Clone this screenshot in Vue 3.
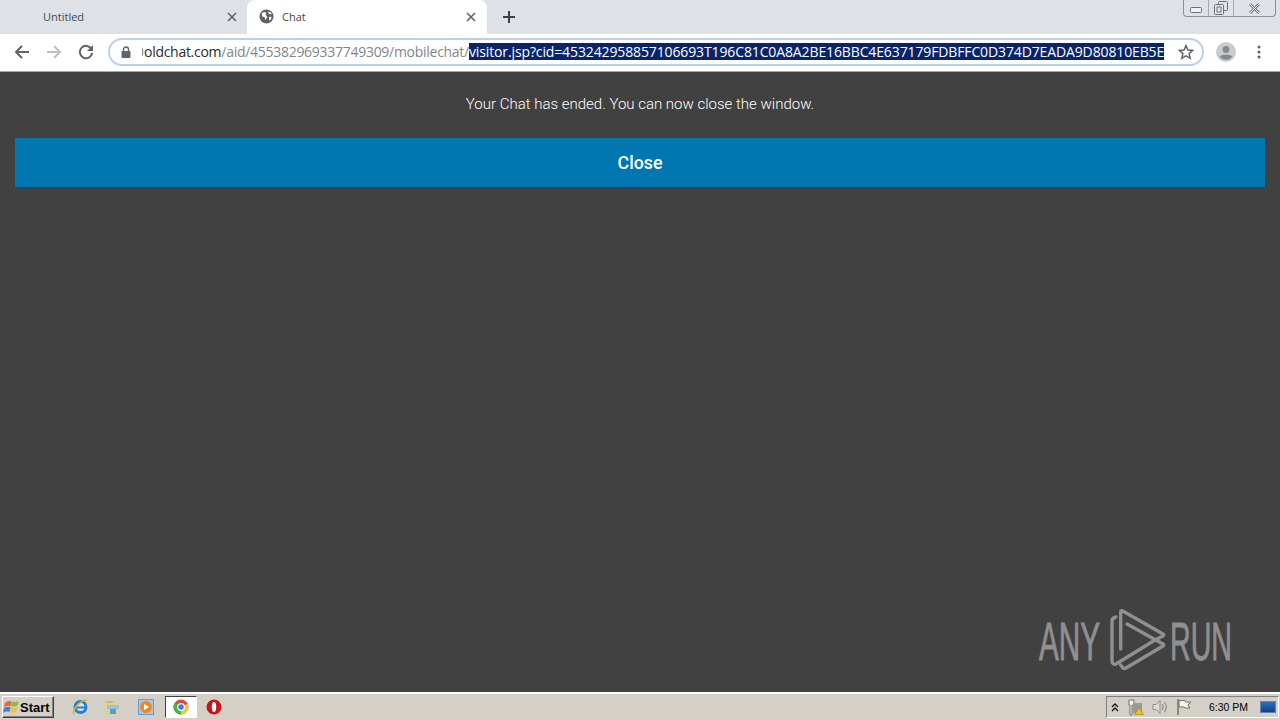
<script setup>
const lead = 'oldchat.com'
const path = '/aid/455382969337749309/mobilechat/'
const sel = 'visitor.jsp?cid=453242958857106693T196C81C0A8A2BE16BBC4E637179FDBFFC0D374D7EADA9D80810EB5E'
</script>

<template>
  <div class="screen">
    <header class="tabstrip">
      <div class="tab">
        <span class="tab-title first">Untitled</span>
        <svg class="x" width="10" height="10" viewBox="0 0 10 10"><path d="M1 1l8 8M9 1l-8 8" stroke="#5f6368" stroke-width="1.6"/></svg>
      </div>
      <div class="tab active">
        <svg class="globe" width="15" height="15" viewBox="0 0 16 16">
          <circle cx="8" cy="8" r="7.5" fill="#5f6368"/>
          <path d="M3 4.2l3.2-.9 1.6 1.2-.9 1.6 1.800 1.500-.6 2.200-1.200 1.800-1-2.700L3.200 7.600zM9.600 2.600l2.600.9 1.600 2-2.400.2-1.200-1.400zM10.600 8.600l2.800-.4-.6 2.600-1.800 1.600z" fill="#fff"/>
        </svg>
        <span class="tab-title">Chat</span>
        <svg class="x" width="10" height="10" viewBox="0 0 10 10"><path d="M1 1l8 8M9 1l-8 8" stroke="#5f6368" stroke-width="1.6"/></svg>
      </div>
      <svg class="plus" width="12" height="12" viewBox="0 0 12 12"><path d="M6 0v12M0 6h12" stroke="#3c4043" stroke-width="2"/></svg>
      <div class="winbtns">
        <span class="wb min"><svg width="12" height="6" viewBox="0 0 12 6"><rect x="0.5" y="0.5" width="11" height="5" rx="1" fill="#eef0f4" stroke="#6b7078"/></svg></span>
        <span class="wb max"><svg width="14" height="14" viewBox="0 0 14 14"><rect x="4.5" y="0.5" width="9" height="9" rx="1" fill="none" stroke="#6b7078"/><rect x="0.5" y="3.500" width="9" height="10" rx="1" fill="#e4e7ee" stroke="#6b7078"/><rect x="3" y="6" width="4" height="5" fill="none" stroke="#6b7078"/></svg></span>
        <span class="wb cls"><svg width="13" height="11" viewBox="0 0 13 11"><path d="M2 1l9 9M11 1l-9 9" stroke="#7a7f87" stroke-width="2.6"/><path d="M2 1l9 9M11 1l-9 9" stroke="#eef0f4" stroke-width="1"/></svg></span>
      </div>
    </header>

    <nav class="toolbar">
      <svg class="nav" width="16" height="16" viewBox="0 0 16 16"><path d="M15 8H2M8 2L2 8l6 6" fill="none" stroke="#5f6368" stroke-width="2"/></svg>
      <svg class="nav" width="16" height="16" viewBox="0 0 16 16"><path d="M1 8h13M8 2l6 6-6 6" fill="none" stroke="#bcc0c5" stroke-width="2"/></svg>
      <svg class="nav" width="16" height="16" viewBox="0 0 16 16"><path d="M13.6 5.200A6.200 6.200 0 1 0 14.200 9" fill="none" stroke="#5f6368" stroke-width="2"/><path d="M15 1v6H9z" fill="#5f6368"/></svg>
      <div class="omnibox">
        <svg class="lock" width="10" height="12" viewBox="0 0 10 12"><path d="M2.500 5V3.500a2.500 2.500 0 0 1 5 0V5" fill="none" stroke="#5f6368" stroke-width="1.400"/><rect x="0.5" y="5" width="9" height="7" rx="1" fill="#5f6368"/></svg>
        <svg class="sliver" width="2" height="8" viewBox="0 0 2 8"><path d="M0 0q2 4 0 8" fill="none" stroke="#777" stroke-width="1"/></svg>
        <div class="url"><span class="lead">{{ lead }}</span><span class="path">{{ path }}</span><span class="sel">{{ sel }}</span></div>
        <svg class="star" width="16" height="16" viewBox="0 0 16 16"><path d="M8 1.600l1.900 4.400 4.800.4-3.600 3.200 1.100 4.700L8 11.800l-4.200 2.500 1.100-4.700L1.300 6.400 6.100 6z" fill="none" stroke="#5f6368" stroke-width="1.500"/></svg>
      </div>
      <svg class="avatar" width="20" height="20" viewBox="0 0 20 20"><circle cx="10" cy="10" r="10" fill="#c9cbce"/><circle cx="10" cy="7.500" r="3.400" fill="#85888c"/><path d="M3.600 14.600c1.600-2.600 11.200-2.600 12.800 0a8 8 0 0 1-12.800 0z" fill="#85888c"/></svg>
      <svg class="dots" width="4" height="14" viewBox="0 0 4 14"><circle cx="2" cy="2" r="1.500" fill="#5f6368"/><circle cx="2" cy="7" r="1.500" fill="#5f6368"/><circle cx="2" cy="12" r="1.500" fill="#5f6368"/></svg>
    </nav>

    <main class="page">
      <p class="msg">Your Chat has ended. You can now close the window.</p>
      <button class="close">Close</button>
      <div class="mark">
        <span class="any">ANY</span>
        <svg width="66" height="70" viewBox="0 0 66 70">
          <g fill="none" stroke="#909090" stroke-width="3.400" stroke-linejoin="round" stroke-linecap="round">
            <path d="M15.700 43V6q0-2 2-1L58 28q1.500 1 0 2L50 34"/>
            <path d="M22 18L58 38q1.500 1 0 2L21 62q-2 1-3 0l-2.300-3"/>
            <path d="M11 11Q7 12 7 15V55q0 4 4 3L50 34"/>
          </g>
        </svg>
        <span class="run">RUN</span>
      </div>
    </main>

    <footer class="taskbar">
      <button class="start">
        <svg width="17" height="18" viewBox="0 0 18 18">
          <path d="M2 5q3-3 7-2l-1 5Q5 7 1 9z" fill="#e8672c"/><path d="M9.500 3q3 1.500 7-.5l-1 5q-4 2-7 .5z" fill="#8fbf3a"/><path d="M1 10q3-2 7-1l-1 5q-4-1-7 1z" fill="#3d82d6"/><path d="M8.500 9.500q3 1.500 6.500-.5l-1 5q-3 2-6.500.5z" fill="#edc53a"/>
        </svg>
        <span>Start</span>
      </button>
      <div class="quick">
        <svg width="18" height="18" viewBox="0 0 18 18"><circle cx="9.500" cy="9" r="5.500" fill="#cfe6f7" stroke="#2a7fd0" stroke-width="3"/><path d="M5 9.500h9" stroke="#2a7fd0" stroke-width="2"/><path d="M3 16C0 12 11 1 16 2" fill="none" stroke="#e0b030" stroke-width="1.500"/></svg>
        <svg width="18" height="18" viewBox="0 0 18 18"><path d="M2 5h14v11H2z" fill="#e7d08a"/><path d="M2 3h7l1 2H2z" fill="#d4b860"/><path d="M3 7h12v4H3z" fill="#8fc6e8"/><path d="M6 11h6v5H6z" fill="#5b9cc9"/></svg>
        <svg width="18" height="18" viewBox="0 0 18 18"><rect x="1.500" y="1.500" width="15" height="15" fill="#a8c6e4" stroke="#6e9cc8"/><circle cx="9" cy="9" r="6" fill="#ee8a1c"/><path d="M7 6l5 3-5 3z" fill="#fff"/></svg>
        <span class="chrome-task"><svg width="16" height="16" viewBox="0 0 16 16"><circle cx="8" cy="8" r="7.500" fill="#dd4b3e"/><path d="M8 8l6.800-3.200A7.500 7.500 0 0 1 8 15.500z" fill="#f6c63c"/><path d="M8 8L8 15.500A7.500 7.500 0 0 1 1.500 11.800 7.500 7.500 0 0 1 2 3.500z" fill="#4caf50"/><circle cx="8" cy="8" r="3.400" fill="#3f7fe0" stroke="#fff" stroke-width="1.200"/></svg></span>
        <svg width="16" height="16" viewBox="0 0 16 16"><circle cx="8" cy="8" r="7.500" fill="#c4161c"/><ellipse cx="8" cy="8" rx="2.200" ry="5" fill="#fff"/></svg>
      </div>
      <div class="tray">
        <svg width="8" height="9" viewBox="0 0 8 9"><path d="M1 4l3-3 3 3M1 8l3-3 3 3" fill="none" stroke="#111" stroke-width="1.300"/></svg>
        <svg class="net" width="16" height="17" viewBox="0 0 16 17"><path d="M1 1h5v5H4v10H2V6H1z" fill="#f4f2ec" stroke="#555" stroke-width=".8"/><rect x="5" y="4" width="9" height="10" fill="#9a9a98"/><path d="M11 8l4.500 7.500h-9z" fill="#f0c020" stroke="#8a6a00" stroke-width=".5"/></svg>
        <svg width="16" height="16" viewBox="0 0 16 16"><path d="M1 5.500h3l4-4v13l-4-4H1z" fill="#dcdcd6" stroke="#8e8e8a"/><path d="M10 5c1.500 2 1.500 4 0 6M12.500 3c2.200 3 2.200 7 0 10" fill="none" stroke="#8e8e8a" stroke-width="1.200"/></svg>
        <svg width="16" height="16" viewBox="0 0 16 16"><path d="M2 0v16" stroke="#6e6e6a" stroke-width="1.400"/><path d="M3 1.500h6l1 1.500h5l-3 3 2 3H9L8 8H3z" fill="#f4f2ec" stroke="#6e6e6a"/></svg>
        <span class="time">6:30 PM</span>
        <span class="desk"></span>
      </div>
    </footer>
  </div>
</template>

<style>
html, body { margin: 0; overflow: hidden; }
</style>

<style scoped>
.screen { width: 1280px; height: 720px; display: flex; flex-direction: column; overflow: hidden; }
svg { display: block; flex: none; }

.tabstrip { height: 34px; background: #dee1e6; display: flex; align-items: stretch; flex: none; }
.tab { width: 240px; display: flex; align-items: center; padding: 0 3px 1px 0; box-sizing: border-box; font: 11px "Open Sans", sans-serif; color: #45484c; }
.tab.active { background: #fff; border-radius: 8px 8px 0 0; margin-left: 7px; padding: 0 11px 1px 12px; }
.tab-title { flex: 1; }
.tab-title.first { padding-left: 43px; }
.globe { margin-right: 8px; }
.x { margin-left: 8px; }
.plus { align-self: center; margin-left: 16px; }
.winbtns { margin-left: auto; margin-right: 4px; height: 16px; display: flex; border: 1px solid #8b8f96; border-top: none; border-radius: 0 0 4px 4px; }
.wb { display: flex; align-items: center; justify-content: center; }
.wb + .wb { border-left: 1px solid #a6aab0; }
.min { width: 24px; padding-top: 4px; box-sizing: border-box; }
.max { width: 24px; }
.cls { width: 41px; }

.toolbar { height: 36px; padding-bottom: 1px; background: #fff; display: flex; align-items: center; flex: none; border-bottom: 1px solid #a8a8a8; }
.nav { margin-left: 16px; }
.nav:first-child { margin-left: 14px; }
.omnibox { margin-left: 14px; width: 1096px; height: 28px; box-sizing: border-box; border: 2px solid #bcd0ec; border-radius: 14px; display: flex; align-items: center; padding: 0 8px 0 11px; }
.lock { margin-right: 11px; }
.url { flex: none; white-space: nowrap; font: 14px "Open Sans", sans-serif; line-height: 17px; display: flex; margin-bottom: 1px; letter-spacing: -0.28px; }
.lead { color: #2b2b2b; }
.path { color: #80868b; }
.sel { background: #0a246a; color: #fff; letter-spacing: -0.124px; }
.star { margin-left: auto; }
.avatar { margin-left: 12px; }
.dots { margin-left: 21px; }

.page { flex: 1; position: relative; background: #414141; display: flex; flex-direction: column; align-items: center; font-family: Roboto, sans-serif; }
.msg { margin: 23px 0 0; font-size: 15px; font-weight: 300; line-height: 18px; color: #fff; }
.close { margin-top: 25px; width: 1250px; height: 49px; border: none; background: #0077b0; color: #fff; font: 500 17.8px Roboto, sans-serif; }
.mark { position: absolute; left: 1039px; top: 534px; display: flex; align-items: center; color: #909090; font: 53px/1 "Liberation Sans", sans-serif; -webkit-text-stroke: 0.9px #909090; }
.mark span { display: block; white-space: nowrap; transform-origin: left center; }
.any { width: 63px; margin-right: 3px; transform: scaleX(.56); }
.run { width: 60px; margin-left: -1px; transform: scaleX(.54); }

.taskbar { height: 28px; flex: none; box-sizing: border-box; background: #d4d0c8; border-top: 2px solid #fff; display: flex; align-items: center; }
.start { margin-left: 2px; width: 52px; height: 22px; padding: 0; display: flex; align-items: center; gap: 0; background: #d4d0c8; border: 1px solid; border-color: #fff #404040 #404040 #fff; box-shadow: inset -1px -1px 0 #808080; font: bold 13px "Liberation Sans", sans-serif; color: #000; box-sizing: border-box; }
.quick { margin-left: 17px; display: flex; align-items: center; gap: 15px; }
.chrome-task { width: 32px; height: 22px; margin: 0 -6px 0 -5px; box-sizing: border-box; background: #fff; border: 1px solid; border-color: #404040 #fff #fff #404040; display: flex; align-items: center; justify-content: center; }
.tray { margin-left: auto; margin-right: 1px; width: 173px; height: 22px; box-sizing: border-box; border: 1px solid; border-color: #808080 #fff #fff #808080; display: flex; align-items: center; gap: 8px; padding: 0 2px 0 4px; }
.net { margin-left: 1px; }
.time { margin-left: 9px; font: 10.5px "Liberation Sans", sans-serif; color: #000; }
.desk { margin-left: auto; width: 16px; height: 12px; background: linear-gradient(#2d6fc0, #173f80); border: 1px solid #5a86b8; box-sizing: border-box; }
</style>
